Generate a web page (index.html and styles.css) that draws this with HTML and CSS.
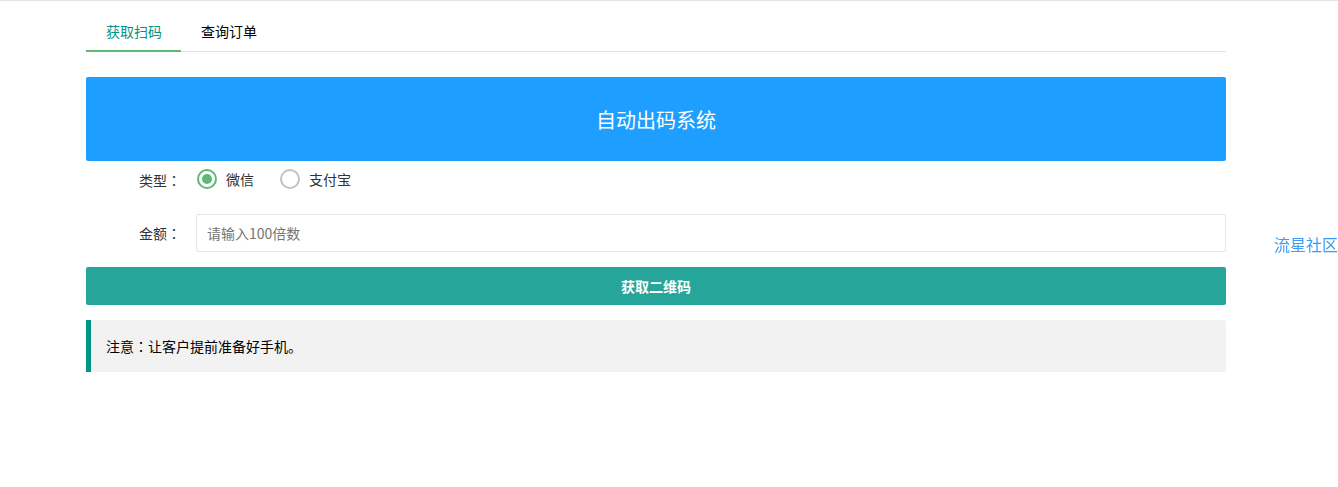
FILE: index.html
```html
<!DOCTYPE html>
<html lang="zh-CN">
<head>
<meta charset="utf-8">
<title>自动出码系统</title>
<link rel="stylesheet" href="styles.css">
</head>
<body>
<div class="page">
  <div class="tabs">
    <div class="tab active">获取扫码</div>
    <div class="tab">查询订单</div>
  </div>
  <div class="banner">自动出码系统</div>
  <div class="row">
    <label class="label">类型<span class="colon" lang="ja">：</span></label>
    <div class="radios">
      <span class="radio checked"><i class="dot"></i>微信</span>
      <span class="radio"><i class="dot"></i>支付宝</span>
    </div>
  </div>
  <div class="row">
    <label class="label">金额<span class="colon" lang="ja">：</span></label>
    <input class="input" type="text" placeholder="请输入100倍数">
  </div>
  <button class="btn">获取二维码</button>
  <div class="note">注意<span class="colon" lang="ja">：</span>让客户提前准备好手机。</div>
</div>
<a class="side-link">流星社区</a>
</body>
</html>
```
FILE: styles.css
```css
html, body {
  margin: 0;
  padding: 0;
  background: #fff;
}
body {
  border-top: 1px solid #e2e2e2;
  font-family: "Microsoft YaHei", "Noto Sans CJK SC", "Liberation Sans", sans-serif;
  font-size: 14px;
  color: #333;
}
.colon {
  font-family: "Noto Sans CJK JP", sans-serif;
}
.page {
  width: 1140px;
  margin-left: 86px;
  padding-top: 10px;
}
.tabs {
  display: flex;
  height: 40px;
  border-bottom: 1px solid #e2e2e2;
}
.tab {
  position: relative;
  padding: 0 20px;
  line-height: 40px;
  height: 40px;
  color: #000;
  font-size: 14px;
}
.tab.active {
  color: #009688;
  padding-right: 19px;
}
.tab.active::after {
  content: "";
  position: absolute;
  left: 0;
  right: 0;
  bottom: -1px;
  height: 2px;
  background: #5FB878;
}
.banner {
  margin-top: 25px;
  height: 84px;
  background: #1E9FFF;
  border-radius: 2px;
  color: #fff;
  font-size: 20px;
  display: flex;
  align-items: center;
  justify-content: center;
}
.row {
  display: flex;
  align-items: center;
  height: 38px;
  margin-bottom: 15px;
}
.label {
  width: 80px;
  padding: 0 15px;
  text-align: right;
  color: #333;
  font-size: 14px;
  flex-shrink: 0;
}
.radios {
  display: flex;
  align-items: center;
  margin-top: -3px;
}
.radio {
  display: flex;
  align-items: center;
  margin-right: 25px;
  color: #333;
  font-size: 14px;
  line-height: 22px;
}
.dot {
  display: inline-block;
  box-sizing: border-box;
  width: 20px;
  height: 20px;
  border: 2px solid #c2c2c2;
  border-radius: 50%;
  margin: 0 9px 0 1px;
  position: relative;
}
.radio.checked .dot {
  border-color: #5FB878;
}
.radio.checked .dot::after {
  content: "";
  position: absolute;
  left: 3px;
  top: 3px;
  width: 10px;
  height: 10px;
  border-radius: 50%;
  background: #5FB878;
}
.input {
  flex: 1;
  box-sizing: border-box;
  height: 38px;
  border: 1px solid #e6e6e6;
  border-radius: 2px;
  padding: 0 10px;
  font-family: inherit;
  font-size: 14px;
  color: #333;
  outline: none;
}
.input::placeholder {
  color: #757575;
}
.btn {
  display: block;
  width: 100%;
  height: 38px;
  border: none;
  border-radius: 2px;
  background: #26A69A;
  color: #fff;
  font-family: inherit;
  font-size: 14px;
  font-weight: bold;
  margin: 0 0 15px 0;
  padding: 0;
}
.note {
  background: #f2f2f2;
  border-left: 5px solid #009688;
  border-radius: 0 2px 2px 0;
  padding: 15px;
  line-height: 22px;
  color: #000;
  font-size: 14px;
}
.side-link {
  position: fixed;
  left: 1274px;
  top: 233px;
  font-size: 16px;
  line-height: 22px;
  color: #3d9cf5;
  white-space: nowrap;
}
```
